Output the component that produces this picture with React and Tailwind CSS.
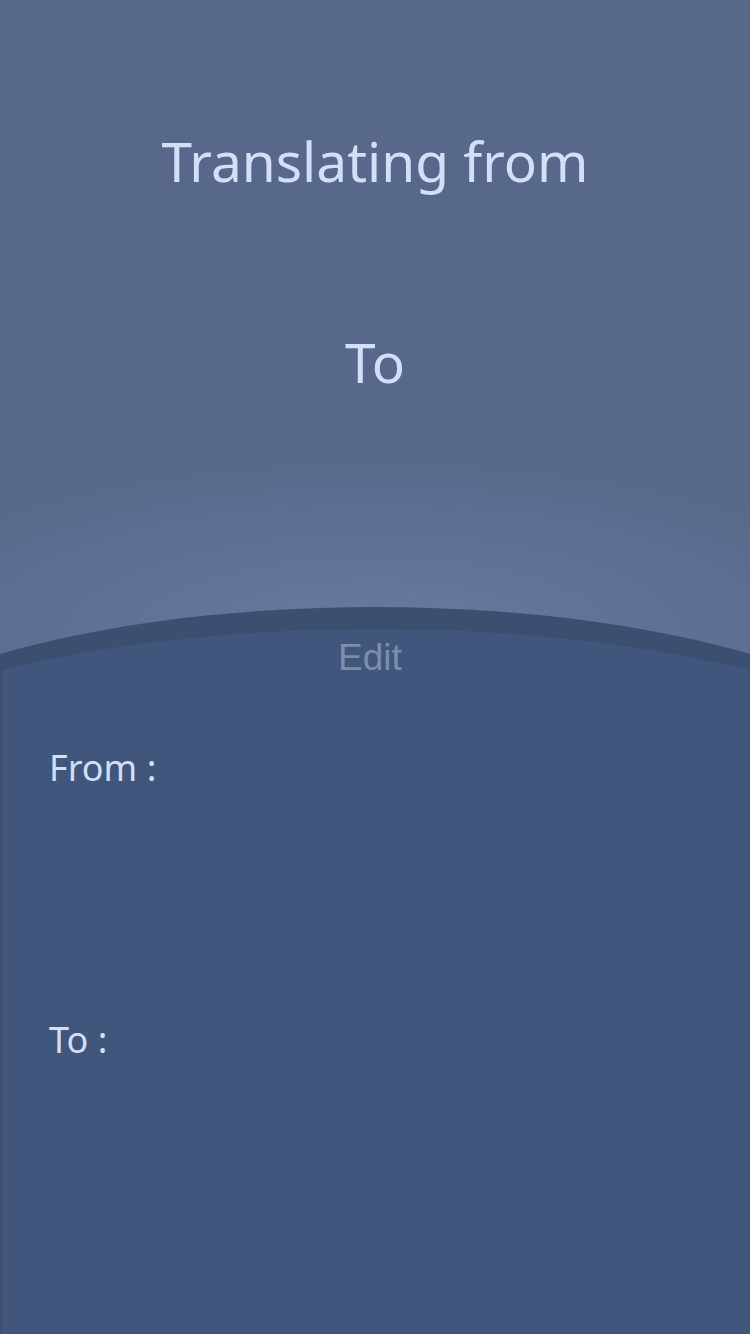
import React from 'react';

const sans = "font-['Noto_Sans',sans-serif]";

export default function App() {
  return (
    <div className="flex min-h-[1334px] w-[750px] flex-col overflow-hidden bg-[#57688a] bg-[radial-gradient(ellipse_560px_190px_at_50%_640px,#6a7b9e_0%,#62739a_40%,#57688a_100%)]">
      {/* header */}
      <div className="h-[607px]">
        <h1 className={`${sans} pt-[133px] text-center text-[55px] leading-none text-[#d3dff7]`}>
          Translating from
        </h1>
        <p className={`${sans} pt-[146px] text-center text-[55px] leading-none text-[#d3dff7]`}>
          To
        </p>
      </div>

      {/* curved bottom panel */}
      <div className="-mx-[200px] flex w-[1150px] flex-1 flex-col overflow-hidden rounded-t-[575px_194px] border-t-[22px] border-[#3d4f70] bg-[#41567c]">
        <div className="ml-[200px] flex w-[750px] flex-1 flex-col border-l-2 border-[#3d4f70]">
          <button className="mt-[10px] self-center pr-[12px] font-['Liberation_Sans',sans-serif] text-[37px] leading-none text-[#7e8dad]">
            Edit
          </button>
          <div className={`${sans} mt-[74px] pl-[47px] text-[36px] leading-none text-[#d3dff7]`}>From :</div>
          <div className={`${sans} mt-[236px] pl-[47px] text-[36px] leading-none text-[#d3dff7]`}>To :</div>
        </div>
      </div>
    </div>
  );
}
